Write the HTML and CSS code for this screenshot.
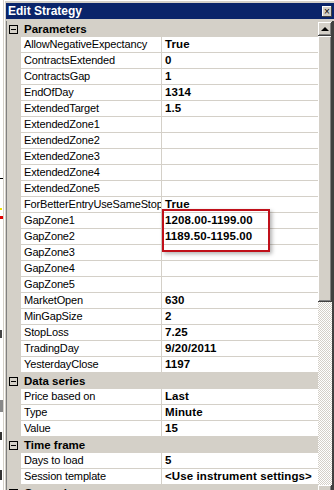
FILE: index.html
```html
<!DOCTYPE html>
<html lang="en">
<head>
    <meta charset="UTF-8">
    <title>Edit Strategy</title>
    <link rel="stylesheet" href="styles.css">
</head>
<body>
    <div class="chart-edge">
        <svg width="3" height="490" viewBox="0 0 3 490">
            <rect x="0" y="178" width="3" height="1" fill="#000"/>
            <rect x="0" y="208" width="2" height="2" fill="#f0e000"/>
            <rect x="0" y="216" width="3" height="3" fill="#e00000"/>
            <rect x="0" y="330" width="2" height="8" fill="#444"/>
            <rect x="0" y="400" width="3" height="12" fill="#888"/>
            <rect x="0" y="432" width="2" height="8" fill="#333"/>
            <rect x="0" y="470" width="2" height="10" fill="#333"/>
        </svg>
    </div>
    <div class="window">
        <div class="titlebar">
            <span class="title">Edit Strategy</span>
            <span class="close">&#215;</span>
        </div>
        <div class="grid">
            <div class="props">
                <div class="cat"><span class="toggle"></span><span class="cat-name">Parameters</span></div>
                <div class="row"><span class="name">AllowNegativeExpectancy</span><span class="value">True</span></div>
                <div class="row"><span class="name">ContractsExtended</span><span class="value">0</span></div>
                <div class="row"><span class="name">ContractsGap</span><span class="value">1</span></div>
                <div class="row"><span class="name">EndOfDay</span><span class="value">1314</span></div>
                <div class="row"><span class="name">ExtendedTarget</span><span class="value">1.5</span></div>
                <div class="row"><span class="name">ExtendedZone1</span><span class="value"></span></div>
                <div class="row"><span class="name">ExtendedZone2</span><span class="value"></span></div>
                <div class="row"><span class="name">ExtendedZone3</span><span class="value"></span></div>
                <div class="row"><span class="name">ExtendedZone4</span><span class="value"></span></div>
                <div class="row"><span class="name">ExtendedZone5</span><span class="value"></span></div>
                <div class="row"><span class="name">ForBetterEntryUseSameStopLoss</span><span class="value">True</span></div>
                <div class="row"><span class="name">GapZone1</span><span class="value">1208.00-1199.00</span></div>
                <div class="row"><span class="name">GapZone2</span><span class="value">1189.50-1195.00</span></div>
                <div class="row"><span class="name">GapZone3</span><span class="value"></span></div>
                <div class="row"><span class="name">GapZone4</span><span class="value"></span></div>
                <div class="row"><span class="name">GapZone5</span><span class="value"></span></div>
                <div class="row"><span class="name">MarketOpen</span><span class="value">630</span></div>
                <div class="row"><span class="name">MinGapSize</span><span class="value">2</span></div>
                <div class="row"><span class="name">StopLoss</span><span class="value">7.25</span></div>
                <div class="row"><span class="name">TradingDay</span><span class="value">9/20/2011</span></div>
                <div class="row"><span class="name">YesterdayClose</span><span class="value">1197</span></div>
                <div class="cat"><span class="toggle"></span><span class="cat-name">Data series</span></div>
                <div class="row"><span class="name">Price based on</span><span class="value">Last</span></div>
                <div class="row"><span class="name">Type</span><span class="value">Minute</span></div>
                <div class="row"><span class="name">Value</span><span class="value">15</span></div>
                <div class="cat"><span class="toggle"></span><span class="cat-name">Time frame</span></div>
                <div class="row"><span class="name">Days to load</span><span class="value">5</span></div>
                <div class="row"><span class="name">Session template</span><span class="value">&lt;Use instrument settings&gt;</span></div>
                <div class="cat"><span class="toggle"></span><span class="cat-name">General</span></div>
                <div class="highlight-box"></div>
            </div>
            <div class="scrollbar">
                <div class="sb-btn"><span class="arrow-up"></span></div>
                <div class="sb-thumb"></div>
                <div class="sb-track"></div>
                <div class="sb-btn"><span class="arrow-down"></span></div>
            </div>
        </div>
    </div>
</body>
</html>
```

FILE: styles.css
```css
body {
    margin: 0;
    padding: 0;
    width: 334px;
    height: 490px;
    overflow: hidden;
    background: #fff;
    display: flex;
    font-family: "Liberation Sans", Arial, sans-serif;
    font-size: 11px;
    color: #000;
}
.chart-edge {
    width: 3px;
    flex: none;
}
.chart-edge svg {
    display: block;
}
.window {
    flex: 1;
    background: #d4d0c8;
    border-left: 1px solid #d4d0c8;
    box-shadow: inset 1px 1px #fff;
    padding: 3px 0 0 2px;
    display: flex;
    flex-direction: column;
}
.titlebar {
    flex: none;
    height: 16px;
    background: #0a246a;
    color: #fff;
    display: flex;
    align-items: center;
    justify-content: space-between;
    padding: 0 2px 0 2px;
}
.title {
    font-weight: bold;
    font-size: 12px;
}
.close {
    width: 10px;
    height: 11px;
    background: #d4d0c8;
    color: #000;
    font-size: 10px;
    line-height: 11px;
    text-align: center;
    box-shadow: inset -1px -1px #404040, inset 1px 1px #fff;
}
.grid {
    flex: none;
    margin-top: 2px;
    display: flex;
    border-left: 1px solid #808080;
    border-right: 2px solid #404040;
    background: #fff;
}
.props {
    flex: 1;
    position: relative;
}
.row {
    display: grid;
    grid-template-columns: 14px 141px 1fr;
    height: 16px;
}
.row::before {
    content: "";
    background: #d4d0c8;
}
.name, .value {
    height: 15px;
    line-height: 15px;
    border-bottom: 1px solid #d4d0c8;
    white-space: nowrap;
    overflow: hidden;
}
.name {
    padding-left: 3px;
    letter-spacing: -0.15px;
    border-right: 1px solid #d4d0c8;
}
.value {
    padding-left: 3px;
    font-weight: bold;
    font-size: 11.5px;
    letter-spacing: 0.1px;
}
.cat {
    height: 16px;
    background: #d4d0c8;
    display: flex;
    align-items: center;
}
.toggle {
    width: 7px;
    height: 7px;
    border: 1px solid #000;
    margin: 0 6px 0 2px;
    position: relative;
}
.toggle::after {
    content: "";
    position: absolute;
    left: 1px;
    top: 3px;
    width: 5px;
    height: 1px;
    background: #000;
}
.cat-name {
    font-weight: bold;
    font-size: 11.5px;
}
.highlight-box {
    position: absolute;
    left: 155px;
    top: 188px;
    width: 104px;
    height: 39px;
    border: 2px solid #c0101a;
    box-shadow: 2px 2px 4px rgba(0, 0, 0, 0.3);
}
.scrollbar {
    width: 14px;
    flex: none;
    display: flex;
    flex-direction: column;
    padding-top: 1px;
    background: #d4d0c8;
}
.sb-btn {
    height: 14px;
    flex: none;
    display: flex;
    align-items: center;
    justify-content: center;
    box-shadow: inset -1px -1px #404040, inset 1px 1px #fff, inset -2px -2px #808080;
    background: #d4d0c8;
}
.arrow-up {
    width: 0;
    height: 0;
    border-left: 4px solid transparent;
    border-right: 4px solid transparent;
    border-bottom: 4px solid #000;
}
.arrow-down {
    width: 0;
    height: 0;
    border-left: 4px solid transparent;
    border-right: 4px solid transparent;
    border-top: 4px solid #000;
}
.sb-thumb {
    height: 266px;
    flex: none;
    background: #d4d0c8;
    box-shadow: inset -1px -1px #404040, inset 1px 1px #fff, inset -2px -2px #808080;
}
.sb-track {
    height: 183px;
    flex: none;
    background: repeating-conic-gradient(#fff 0 25%, #d4d0c8 0 50%) 0 0 / 2px 2px;
}
```
